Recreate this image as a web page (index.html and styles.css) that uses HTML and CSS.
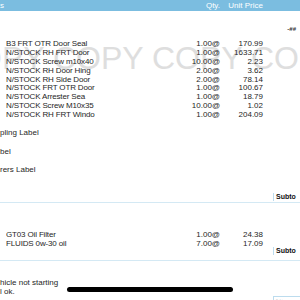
FILE: index.html
```html
<!DOCTYPE html>
<html>
<head>
<meta charset="utf-8">
<link rel="stylesheet" href="styles.css">
</head>
<body>
<div class="page">
  <div class="head">
    <span class="h-left">s</span>
    <span class="num">Qty.</span>
    <span class="num">Unit Price</span>
  </div>
  <div class="ref">-##</div>
  <div class="watermark">COPY COPY COPY COPY</div>
  <div class="items">
    <div class="row"><span class="desc">B3 FRT OTR Door Seal</span><span class="num">1.00@</span><span class="num">170.99</span></div>
    <div class="row"><span class="desc">N/STOCK RH FRT Door</span><span class="num">1.00@</span><span class="num">1633.71</span></div>
    <div class="row"><span class="desc">N/STOCK Screw m10x40</span><span class="num">10.00@</span><span class="num">2.23</span></div>
    <div class="row"><span class="desc">N/STOCK RH Door Hing</span><span class="num">2.00@</span><span class="num">3.62</span></div>
    <div class="row"><span class="desc">N/STOCK RH Side Door</span><span class="num">2.00@</span><span class="num">78.14</span></div>
    <div class="row"><span class="desc">N/STOCK FRT OTR Door</span><span class="num">1.00@</span><span class="num">100.67</span></div>
    <div class="row"><span class="desc">N/STOCK Arrester Sea</span><span class="num">1.00@</span><span class="num">18.79</span></div>
    <div class="row"><span class="desc">N/STOCK Screw M10x35</span><span class="num">10.00@</span><span class="num">1.02</span></div>
    <div class="row"><span class="desc">N/STOCK RH FRT Windo</span><span class="num">1.00@</span><span class="num">204.09</span></div>
  </div>
  <div class="labels">
    <div>pling Label</div>
    <div>bel</div>
    <div>rers Label</div>
  </div>
  <div class="subrow first"><span class="subbox">Subto</span></div>
  <div class="items items2">
    <div class="row"><span class="desc">GT03 Oil Filter</span><span class="num">1.00@</span><span class="num">24.38</span></div>
    <div class="row"><span class="desc">FLUIDS 0w-30 oil</span><span class="num">7.00@</span><span class="num">17.09</span></div>
  </div>
  <div class="subrow second"><span class="subbox">Subto</span></div>
  <div class="notes">
    <div>hicle not starting</div>
    <div>l ok.</div>
  </div>
  <div class="subrow third"><span class="subbox small">Subto</span></div>
  <div class="home"></div>
</div>
</body>
</html>
```
FILE: styles.css
```css
html, body {
  margin: 0;
  padding: 0;
  background: #ffffff;
}
.page {
  position: relative;
  width: 300px;
  height: 300px;
  overflow: hidden;
  font-family: "Liberation Sans", Arial, sans-serif;
  font-size: 8px;
  color: #262626;
}
.head {
  height: 11px;
  background: #7bbde0;
  color: #ffffff;
  display: grid;
  grid-template-columns: 180px 40px 43px;
  align-items: center;
  line-height: 11px;
}
.num {
  text-align: right;
  white-space: nowrap;
}
.ref {
  margin-top: 13.5px;
  line-height: 9px;
  height: 9px;
  text-align: right;
  padding-right: 4px;
  font-size: 6px;
  font-weight: bold;
  color: #333;
}
.watermark {
  position: absolute;
  top: 42px;
  left: -46px;
  white-space: nowrap;
  color: #dedede;
  font-size: 32px;
  line-height: 32px;
  z-index: 0;
}
.items {
  position: relative;
  z-index: 1;
  margin-top: 6.5px;
}
.row {
  display: grid;
  grid-template-columns: 174px 40px 43px;
  padding-left: 6px;
  line-height: 8.875px;
  height: 8.875px;
  white-space: nowrap;
}
.desc {
  overflow: hidden;
  letter-spacing: -0.15px;
}
.labels {
  margin-top: 8.6px;
  display: flex;
  flex-direction: column;
  gap: 9.5px;
  line-height: 9px;
}
.subrow {
  display: flex;
  justify-content: flex-end;
  border-bottom: 1px solid #d4e9f4;
}
.subrow.first {
  margin-top: 18.5px;
  padding-bottom: 1px;
}
.subrow.second {
  margin-top: -1px;
  padding-bottom: 5px;
}
.subrow.third {
  margin-top: 0;
  border-bottom: none;
}
.subbox {
  width: 27px;
  height: 8px;
  line-height: 8px;
  border-left: 1px solid #bcdcee;
  font-weight: bold;
  font-size: 7px;
  color: #111;
  padding-left: 2px;
  overflow: hidden;
  box-sizing: border-box;
}
.subbox.small {
  border-top: 1px solid #bcdcee;
  color: #ccc;
  font-size: 3px;
}
.items2 {
  margin-top: 27.5px;
}
.items2 .row {
  line-height: 9px;
  height: 9px;
}
.notes {
  margin-top: 17px;
  line-height: 9px;
}
.home {
  position: absolute;
  left: 67px;
  top: 287px;
  width: 166px;
  height: 5px;
  border-radius: 3px;
  background: #000000;
}
```
